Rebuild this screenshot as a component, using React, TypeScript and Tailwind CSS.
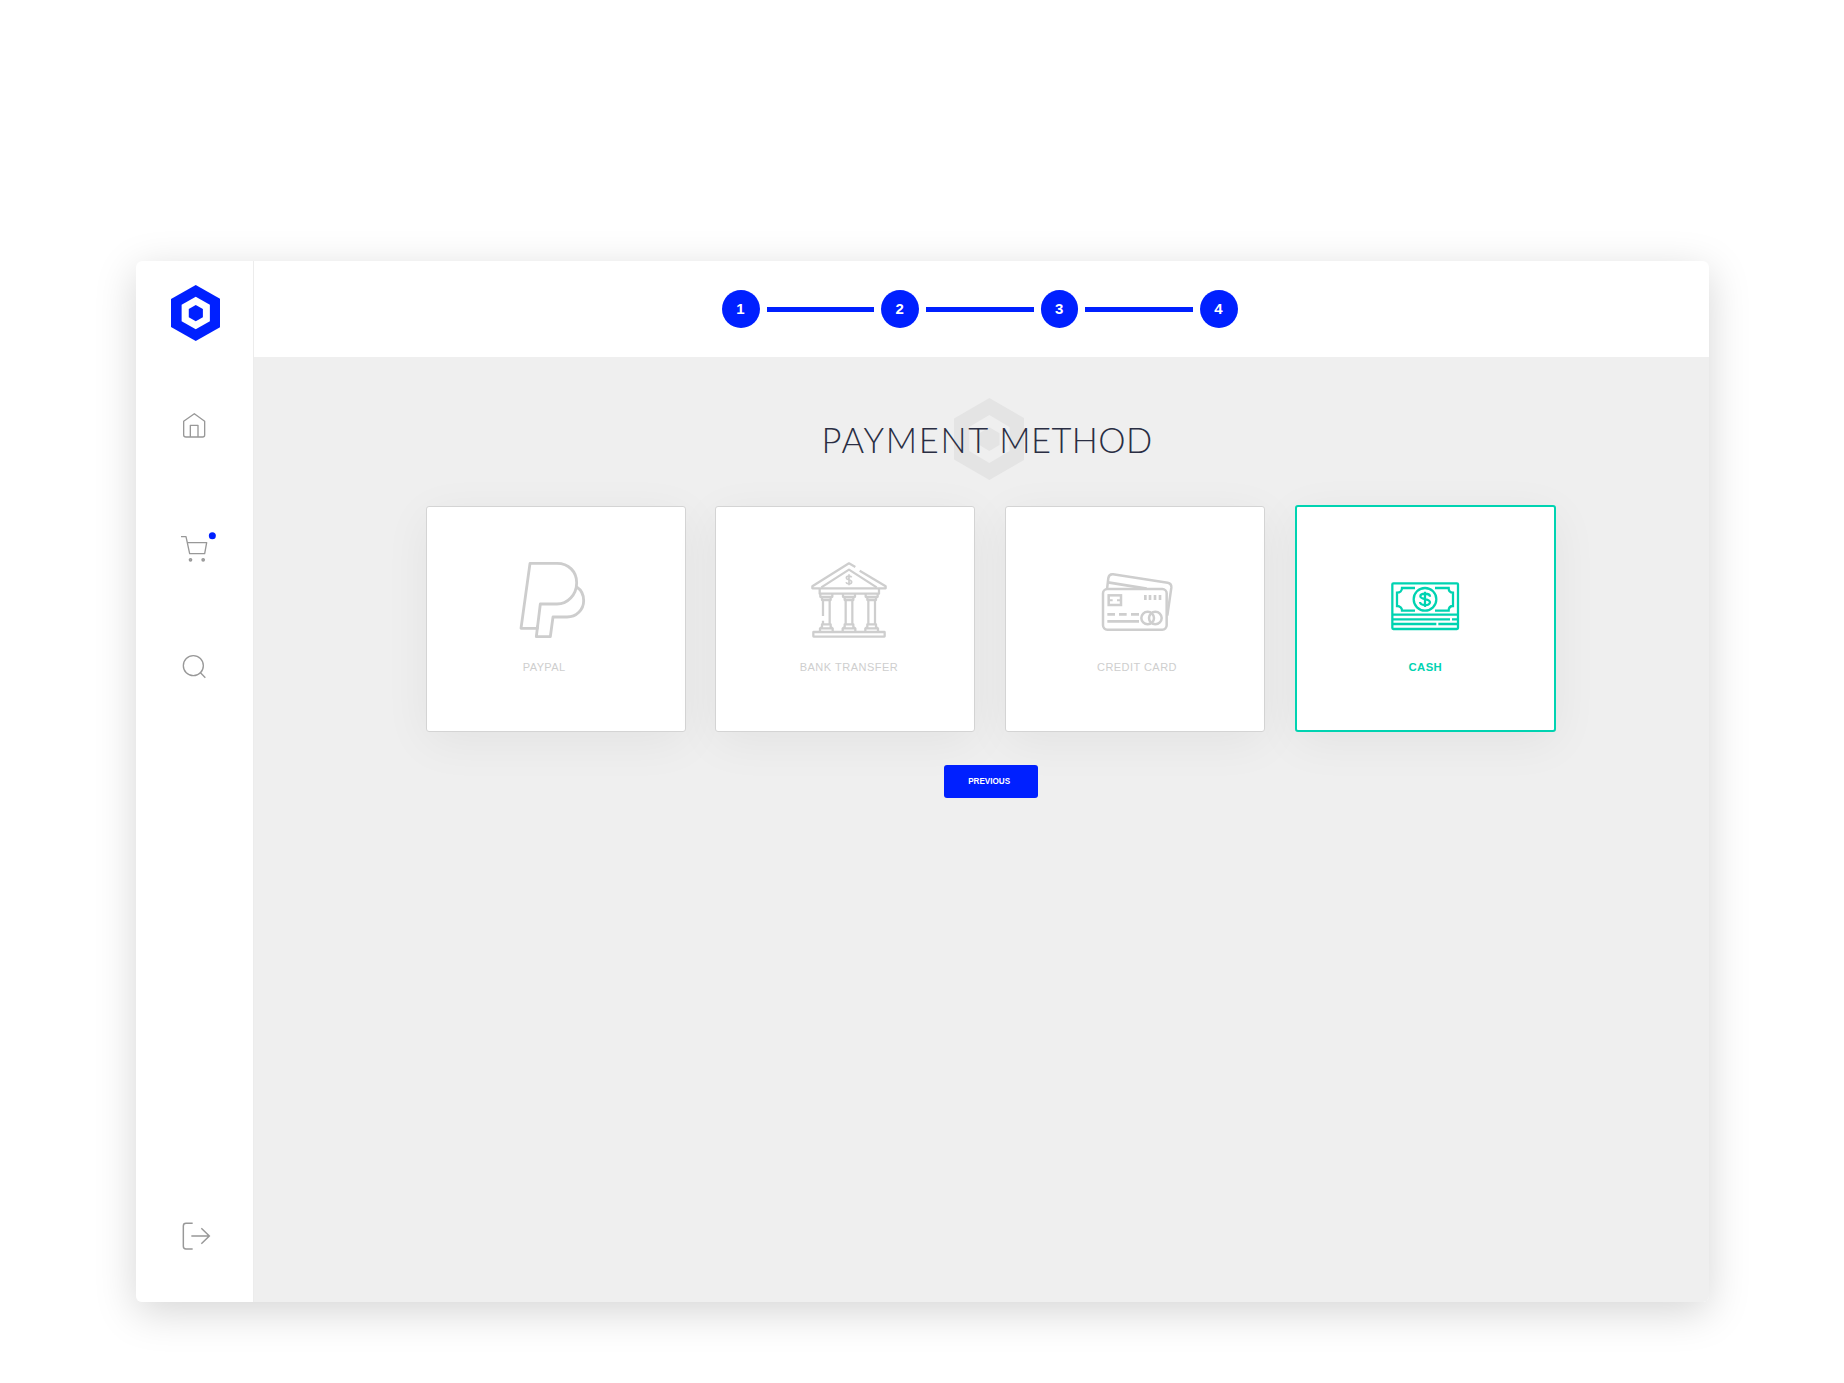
import React from "react";

type Method = { label: string; icon: React.ReactNode; iconPos: string; labelPos: string; active?: boolean };

const columns = [139, 207, 275];

function Hexagon({ className, hole }: { className: string; hole: string }) {
  return (
    <svg viewBox="0 0 149 168" preserveAspectRatio="none" className={className}>
      <path fill="currentColor" d="M74.5 0L149 42V126L74.5 168L0 126V42Z" />
      <path className={hole} d="M74.5 35L117 59.5V108.5L74.5 133L32 108.5V59.5Z" />
      <path fill="currentColor" d="M74.5 60L96 72V96.500L74.500 108.500L53.500 96.500V72Z" />
    </svg>
  );
}

function PaypalIcon() {
  return (
    <svg viewBox="99 48 240 270" className="h-[90px] w-[80px]" fill="none" stroke="#cdcdcd" strokeWidth="8.5" strokeLinejoin="round">
      <path d="M150 70H231C266 70 290 95 290 128C290 165 262 192 231 192H181L172 265H123Z" />
      <path d="M290 141C304 150 311 166 311 182C311 209 289 231 261 231H219L211 290H169L173 257" />
    </svg>
  );
}

function BankIcon() {
  return (
    <svg viewBox="84 48 240 270" className="h-[90px] w-[80px]" fill="none" stroke="#cecece" strokeWidth="6.8" strokeLinejoin="round">
      <path d="M226 81L207 70L97 139V145H317V139L239 92" />
      <path d="M124 142L207 89L290 142" />
      <path d="M119 146V161H297V146" />
      <rect x="100" y="276" width="214" height="14" rx="1" />
      {columns.map((c) => (
        <g key={c}>
          <path d={`M${c - 18} 161V170L${c - 13} 173V180H${c + 13}V173L${c + 18} 170V161M${c - 16} 171H${c + 16}`} />
          <path d={`M${c - 19} 275V265L${c - 13} 261V253H${c + 13}V261L${c + 19} 265V275M${c - 17} 265H${c + 17}`} />
          <path d={c === 139 ? "M129 180V228M129 242V253" : `M${c - 10} 180V253`} />
          <path d={`M${c + 10} 180V253`} />
        </g>
      ))}
      <path strokeWidth="5" d="M215 112C213 107 199 107 199 114C199 121 215 117 215 126C215 133 200 133 198 127M207 103V136" />
    </svg>
  );
}

function CardIcon() {
  return (
    <svg viewBox="69 48 240 270" className="h-[90px] w-[80px]" fill="none" stroke="#cecece" strokeWidth="7.5">
      <path d="M96 148L100 114Q102 102 114 103L278 128Q290 130 289 143L277 227" />
      <path strokeWidth="8" d="M99 127L215 146" />
      <rect x="84" y="147" width="191" height="122" rx="13" />
      <path strokeWidth="8" d="M97 223H120M132 223H155M168 223H192M97 244H192" />
      <rect x="101" y="166" width="37" height="29" />
      <path strokeWidth="6" d="M103 181H113M126 181H136" />
      <path strokeWidth="8" d="M211 165V180M225 165V180M240 165V180M255 165V180" />
      <circle cx="218" cy="234" r="19" />
      <circle cx="241" cy="234" r="19" />
    </svg>
  );
}

function CashIcon() {
  return (
    <svg viewBox="75 18 240 270" className="h-[90px] w-[80px]" fill="none" stroke="#00d3b1" strokeWidth="6.8">
      <rect x="97" y="100" width="197" height="137" rx="3" />
      <path d="M97 194H294M97 208H270M276 208H294M97 222H229M235 222H294" />
      <path d="M165 114H126C126 122 120 128 111 128V168C120 168 126 174 126 182H165" />
      <path d="M225 114H266C266 122 271 128 279 128V168C271 168 266 174 266 182H225" />
      <circle cx="195" cy="148" r="34" />
      <path d="M210 140C210 128 181 129 181 139C181 150 210 145 210 157C210 168 181 168 180 156M195 125V171" />
    </svg>
  );
}

const methods: Method[] = [
  { label: "PAYPAL", icon: <PaypalIcon />, iconPos: "ml-[86px]", labelPos: "-ml-[11.5px] tracking-[0.4px]" },
  { label: "BANK TRANSFER", icon: <BankIcon />, iconPos: "ml-[91.3px]", labelPos: "ml-[3.5px] tracking-[0.5px]" },
  { label: "CREDIT CARD", icon: <CardIcon />, iconPos: "ml-[91.6px]", labelPos: "ml-[1.7px] tracking-[0.45px]" },
  { label: "CASH", icon: <CashIcon />, iconPos: "ml-[88.2px]", labelPos: "tracking-[0.4px]", active: true },
];

function MethodCard({ label, icon, iconPos, labelPos, active }: Method) {
  return (
    <button
      className={
        active
          ? "flex h-[227px] w-[260.6px] flex-col rounded-[3px] border-2 border-[#00d3b1] bg-white shadow-[0_10px_48px_rgba(0,0,0,0.055)]"
          : "mt-[0.7px] flex h-[226px] w-[260px] flex-col rounded-[3px] border border-[#d4d4d4] bg-white shadow-[0_10px_48px_rgba(0,0,0,0.055)]"
      }
    >
      <span className={"mt-[49px] block " + iconPos}>{icon}</span>
      <span
        className={
          (active ? "text-[11.3px] font-bold text-[#00d3b1] " : "text-[11px] text-[#cecece] ") +
          "mt-[13px] w-full text-center leading-[16px] whitespace-nowrap " +
          labelPos
        }
      >
        {label}
      </span>
    </button>
  );
}

function Sidebar() {
  return (
    <nav className="flex h-full w-[118px] shrink-0 flex-col items-start border-r border-[#ececec] bg-white pl-[44px] text-[#989898]">
      <Hexagon className="mt-[24px] -ml-[9.500px] h-[56px] w-[49.500px] text-[#0020ff]" hole="fill-white" />
      <svg viewBox="180 495 90 90" className="mt-[69px] h-[30px] w-[30px]" fill="none" stroke="currentColor" strokeWidth="4" strokeLinejoin="round">
        <path d="M223 506L254 529V570Q254 576 248 576H198Q191 576 191 570V529Z" />
        <path d="M211 576V541H234V576" />
      </svg>
      <svg viewBox="60 60 120 102" className="mt-[90px] h-[34px] w-[40px]" fill="none" stroke="currentColor" strokeWidth="4" strokeLinejoin="round">
        <path d="M63 80H78L89 131H134L140 98H82" />
        <circle cx="91.500" cy="149.500" r="3.600" fill="#b0b0b0" />
        <circle cx="129.500" cy="149.500" r="3.600" fill="#b0b0b0" />
        <circle cx="157" cy="77" r="10.500" fill="#0020ff" stroke="none" />
      </svg>
      <svg viewBox="60 426 90 90" className="mt-[88px] h-[30px] w-[30px]" fill="none" stroke="currentColor" strokeWidth="4">
        <circle cx="100" cy="467" r="30" />
        <path d="M120 487L136 503" />
      </svg>
      <svg viewBox="60 60 102 96" className="mt-[538px] h-[32px] w-[34px]" fill="none" stroke="currentColor" strokeWidth="4.4">
        <path d="M98 70H78Q70 70 70 78V139Q70 147 78 147H98" />
        <path d="M94 108H148M124 85L148 108L124 131" />
      </svg>
    </nav>
  );
}

function Stepper() {
  return (
    <header className="flex h-[96px] shrink-0 items-center bg-white pt-[0.400px] pl-[468.200px]">
      {[1, 2, 3, 4].map((n) => (
        <React.Fragment key={n}>
          {n > 1 && <div className="mx-[7.100px] h-[5.300px] w-[107.500px] bg-[#0020ff]" />}
          <div className="flex h-[37.600px] w-[37.600px] items-center justify-center rounded-full bg-[#0020ff] pr-px text-[15px] font-bold text-white">
            {n}
          </div>
        </React.Fragment>
      ))}
    </header>
  );
}

export default function App() {
  return (
    <div className="h-[1383px] w-[1844px] overflow-hidden bg-white px-[136px] pt-[261px] font-['Liberation_Sans',Arial,sans-serif]">
      <div className="h-[1041px] w-[1573px] rounded-[6px] shadow-[0_10px_42px_rgba(0,0,0,0.17)]">
        <div className="flex h-full w-full overflow-hidden rounded-[6px] bg-[#efefef]">
          <Sidebar />
          <div className="flex min-w-0 flex-1 flex-col">
            <Stepper />
            <main className="flex flex-1 flex-col pt-[41px]">
              <div className="ml-[569px] grid w-[328px] grid-cols-1 place-items-center">
                <Hexagon className="col-start-1 row-start-1 ml-[4px] h-[82px] w-[70.700px] text-[#e4e4e4]" hole="fill-[#efefef]" />
                <h1 className="col-start-1 row-start-1 mt-[2px] font-['Lato',sans-serif] text-[34.500px] leading-[40px] font-light whitespace-nowrap text-[#2a2e43]">
                  <span className="tracking-[1.700px]">PAYMENT</span> <span className="tracking-[0.400px]">METHOD</span>
                </h1>
              </div>
              <div className="mt-[25px] ml-[171.700px] flex items-start gap-[29.800px]">
                {methods.map((m) => (
                  <MethodCard key={m.label} {...m} />
                ))}
              </div>
              <button className="mt-[33px] ml-[689.500px] h-[33.300px] w-[94.300px] rounded-[3px] bg-[#0020ff] pr-[3px] text-[8.150px] font-bold text-white">
                PREVIOUS
              </button>
            </main>
          </div>
        </div>
      </div>
    </div>
  );
}
